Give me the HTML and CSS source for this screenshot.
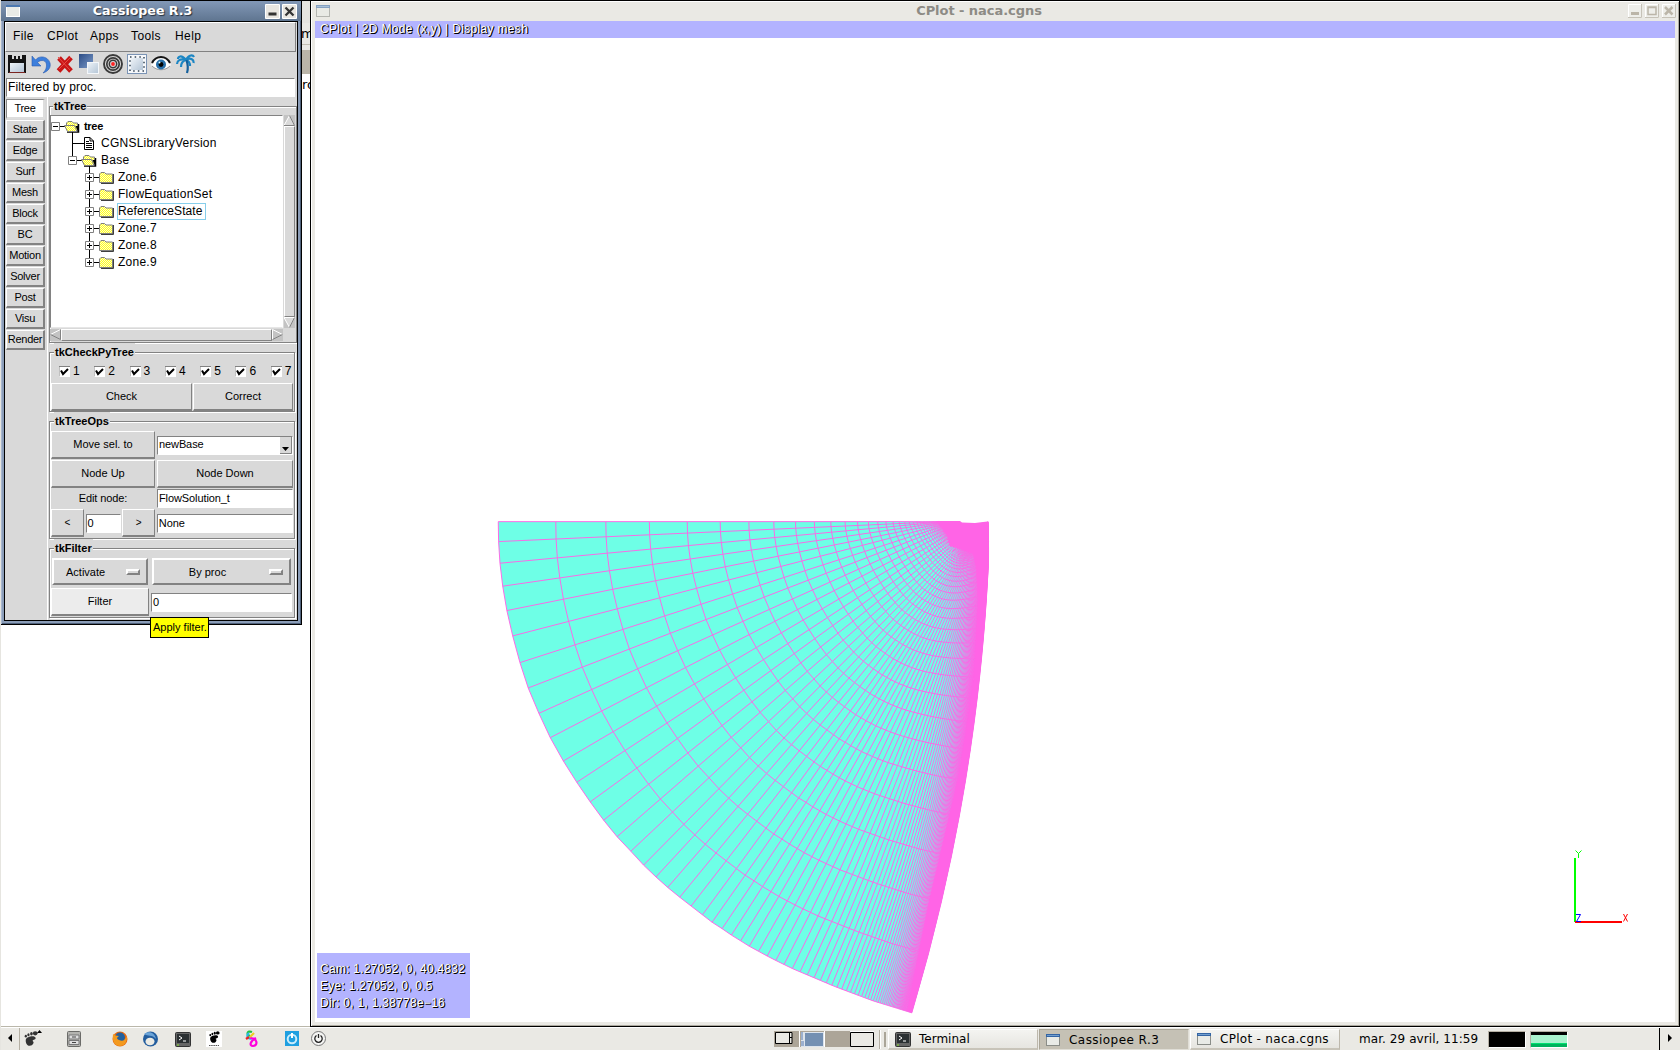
FILE: index.html
```html
<!DOCTYPE html>
<html lang="fr">
<head>
<meta charset="utf-8">
<title>Cassiopee R.3</title>
<link rel="stylesheet" href="styles.css">
</head>
<body>
<svg class="defs" width="0" height="0">
  <defs>
    <pattern id="dither" width="2" height="2" patternUnits="userSpaceOnUse"><rect width="2" height="2" fill="#fffcc8"/><rect width="1" height="1" fill="#ffff22"/><rect x="1" y="1" width="1" height="1" fill="#ffff22"/></pattern>
    <linearGradient id="blueSq" x1="0" y1="0" x2="1" y2="1"><stop offset="0" stop-color="#2b4c86"/><stop offset="1" stop-color="#7c9ac8"/></linearGradient>
    <linearGradient id="paleSq" x1="0" y1="0" x2="1" y2="1"><stop offset="0" stop-color="#eef3f8"/><stop offset="1" stop-color="#b4c5d6"/></linearGradient>
    <symbol id="folder" viewBox="0 0 16 13"><path d="M2 12H14V3" fill="none" stroke="#000" stroke-width="1.500"/><path d="M.5 11.500V3L2 1.500H5.500L7 3H13.500V11.500Z" fill="url(#dither)" stroke="#808080"/></symbol>
    <symbol id="open" viewBox="0 0 16 13"><path d="M3 12H14.500V4" fill="none" stroke="#000" stroke-width="1.500"/><path d="M2.500 5V3L4 1.500H8L9.500 3H13.500V11" fill="url(#dither)" stroke="#808080"/><path d="M.5 5.500H10.500L13 11.500H3.500Z" fill="url(#dither)" stroke="#808080"/><path d="M11.500 6L14 11.500V6Z" fill="#000"/></symbol>
    <symbol id="doc" viewBox="0 0 12 14"><path d="M1.500.5H7L10.500 4V12.500H1.500Z" fill="#fff" stroke="#000"/><path d="M7 .5V4H10.500M3 4.500H6M3 6.500H9M3 8.500H9M3 10.500H9" fill="none" stroke="#000"/></symbol>
    <symbol id="minus" viewBox="0 0 9 9"><path d="M.5.5H8.500V8.500H.5Z" fill="#fff" stroke="#808080"/><path d="M2 4.500H7" stroke="#000"/></symbol>
    <symbol id="plus" viewBox="0 0 9 9"><path d="M.5.5H8.500V8.500H.5Z" fill="#fff" stroke="#808080"/><path d="M2 4.500H7M4.500 2V7" stroke="#000"/></symbol>
    <symbol id="check" viewBox="0 0 11 11"><path d="M0 0H11V11H0Z" fill="#fff"/><path d="M0 10.500V.5H11" fill="none" stroke="#828282"/><path d="M2 4.500L4 8L9 3" fill="none" stroke="#000" stroke-width="2"/></symbol>
    <symbol id="win" viewBox="0 0 14 12"><rect x=".5" y=".5" width="13" height="11" fill="#e9ebe7" stroke="#8a8d88"/><rect width="14" height="3" fill="#3465a4"/><path d="M1 1.500H13" stroke="#729fcf"/></symbol>
    <symbol id="term" viewBox="0 0 16 15"><rect x=".5" y=".5" width="15" height="14" rx="1" fill="#666" stroke="#333"/><rect x="2" y="2" width="12" height="9" fill="#2b3032"/><path d="M4 4L7 6L4 8M8 9H11" fill="none" stroke="#fff"/><path d="M2 13H4" stroke="#8ae234"/></symbol>
    <symbol id="foot" viewBox="0 0 16 16"><ellipse cx="13" cy="2.500" rx="2.500" ry="2.200"/><ellipse cx="9" cy="3" rx="1.400" ry="1.900"/><ellipse cx="5.800" cy="4" rx="1.200" ry="1.600"/><ellipse cx="3" cy="5.500" rx="1.200" ry="1.400"/><path d="M3 9C4 5.500 13 4 13.500 7.500C13.500 10 9.500 9 10.500 11C12.500 12 10.500 16 7 15.800C4 15.500 2.500 12 3 9Z"/></symbol>
  </defs>
</svg>

<div class="desktop">
  <div class="backwin">
    <div class="bw-menu">mi</div><div class="bw-gap"></div><div class="bw-tool"></div><div class="bw-text">ro</div>
  </div>

  <section class="cplot">
    <header class="cp-title">
      <svg class="wicon" width="14" height="12" opacity=".55"><use href="#win"/></svg>
      <span class="cp-name">CPlot - naca.cgns</span>
      <span class="wbtns">
        <svg width="14" height="14"><path d="M.5.5H13.500V13.500H.5Z" fill="#eeeeea" stroke="#fff"/><path d="M0 13.500H13.500V0" fill="none" stroke="#c6c2b8"/><path d="M3 9.500H11" stroke="#bbb5a8" stroke-width="3"/></svg>
        <svg width="14" height="14"><path d="M.5.5H13.500V13.500H.5Z" fill="#eeeeea" stroke="#fff"/><path d="M0 13.500H13.500V0" fill="none" stroke="#c6c2b8"/><path d="M3 3H11V10.500H3ZM3 3.500H11" fill="none" stroke="#bbb5a8" stroke-width="1.500"/></svg>
        <svg width="14" height="14"><path d="M.5.5H13.500V13.500H.5Z" fill="#eeeeea" stroke="#fff"/><path d="M0 13.500H13.500V0" fill="none" stroke="#c6c2b8"/><path d="M3 3L10.500 10.500M10.500 3L3 10.500" stroke="#bbb5a8" stroke-width="2.500"/></svg>
      </span>
    </header>
    <div class="cp-view">
      <div class="cp-info hud">CPlot | 2D Mode (x,y) | Display mesh</div>
      <svg class="mesh" id="mesh" viewBox="315 38 1360 984" width="1360" height="984"></svg>
      <div class="cp-cam hud"><div>Cam: 1.27052, 0, 40.4832</div><div>Eye: 1.27052, 0, 0.5</div><div>Dir: 0, 1, 1.38778e−16</div></div>
      <svg class="axes" width="60" height="80" viewBox="1570 845 60 80"><path d="M1575 858V922" stroke="#0f0" stroke-width="2"/><path d="M1575 922H1622" stroke="#f00" stroke-width="2"/><path d="M1575.500 850.500L1578.500 853.500L1581.500 850.500M1578.500 853.500V858" fill="none" stroke="#0f0"/><path d="M1576 914.500H1580.500L1576.500 921.500H1581" fill="none" stroke="#00f"/><path d="M1623.500 914L1627.500 921.500M1627.500 914L1623.500 921.500" stroke="#f00"/></svg>
    </div>
  </section>

  <section class="cass">
    <header class="ca-title">
      <svg width="14" height="12"><rect x=".5" y=".5" width="13" height="11" fill="#e9ebe7" stroke="#fff"/><path d="M0 1H14" stroke="#4b78b0" stroke-width="2"/></svg>
      <span class="ca-name">Cassiopee R.3</span>
      <span class="wbtns dark">
        <svg width="15" height="15"><path d="M.5.5H14.500V14.500H.5Z" fill="#e8e6e1" stroke="#fff"/><path d="M3.500 10H11.500" stroke="#333" stroke-width="3"/></svg>
        <svg width="15" height="15"><path d="M.5.5H14.500V14.500H.5Z" fill="#e8e6e1" stroke="#fff"/><path d="M3.500 3.500L11.500 11.500M11.500 3.500L3.500 11.500" stroke="#333" stroke-width="2.300"/></svg>
      </span>
    </header>
    <div class="ca-body">
      <nav class="menu"><span class="m1">File</span><span class="m2">CPlot</span><span class="m3">Apps</span><span class="m4">Tools</span><span>Help</span></nav>
      <div class="tools">
        <svg width="20" height="20"><path d="M1 1H5V5H7V2H9V5H11V2H13V5H15V1H19V19H1Z" fill="#141414"/><rect x="3" y="9" width="14" height="9" fill="url(#paleSq)"/><path d="M2 18.500H18" stroke="#7a2420"/></svg>
        <svg width="20" height="20"><path d="M1 2V12H10L6.500 8.500C10 5 16 6 15.500 12C15.300 15 14 17 12 19C18 17 20 13 19 9C17 2 8 1 4.500 6Z" fill="#3d7fdc" stroke="#2c5db0" stroke-width=".6"/></svg>
        <svg width="20" height="20"><path d="M4 4L16 17M16 3.500L3.500 17" stroke="#c81616" stroke-width="5"/><path d="M3 3L15 16M16 3L4 15" stroke="#e94a44" stroke-width="1"/></svg>
        <svg width="20" height="20"><rect width="14" height="14" fill="url(#blueSq)"/><rect x="8.500" y="8.500" width="11" height="11" fill="url(#paleSq)" stroke="#f4f7fa"/></svg>
        <svg width="20" height="20"><g fill="none" stroke="#3a3a3a"><circle cx="10" cy="10" r="9" stroke-width="1.900"/><circle cx="10" cy="10" r="6.200" stroke-width="1.700"/><circle cx="10" cy="10" r="3.700" stroke-width="1.500"/></g><circle cx="10" cy="10" r="1.900" fill="#f22"/></svg>
        <svg width="20" height="20"><rect x=".5" y=".5" width="19" height="19" fill="#f6f8fb" stroke="#7b94b5"/><rect x="4" y="4" width="12" height="12" fill="url(#paleSq)"/><rect x="3" y="3" width="14" height="14" fill="none" stroke="#345" stroke-width="1.500" stroke-dasharray="1.500 3.167"/></svg>
        <svg width="20" height="20"><path d="M0 11C5 2 15 2 20 11C15 17 5 17 0 11Z" fill="#fff"/><path d="M1 9C5 1 15 1 19 9" fill="none" stroke="#151515" stroke-width="2"/><path d="M1 12C6 17 14 17 19 12" fill="none" stroke="#999"/><circle cx="10" cy="10.500" r="5" fill="#286fa8"/><circle cx="10" cy="10.500" r="2.400" fill="#000"/><circle cx="8.500" cy="8.500" r="1" fill="#dff"/></svg>
        <svg width="20" height="20"><g fill="none" stroke="#1c86c4" stroke-width="2.200"><path d="M11 6C6 0 3 3 3 5M11 6C5 4 2 7 2 10M11 6C7 7 6 10 6 13M11 6C14 0 18 1 19 3M11 6C16 3 19 6 18.500 9M11 6C14 7 15 9 15 12"/><path d="M11.500 6C13 11 13 16 12 19" stroke="#15609c"/></g></svg>
      </div>
      <div class="entry msg">Filtered by proc.</div>
      <div class="main">
        <div class="tabs"><span class="on">Tree</span><span>State</span><span>Edge</span><span>Surf</span><span>Mesh</span><span>Block</span><span>BC</span><span>Motion</span><span>Solver</span><span>Post</span><span>Visu</span><span>Render</span></div>
        <div class="panes">
          <fieldset class="tkTree"><legend>tkTree</legend>
            <div class="treegrid">
              <div class="tree">
                <div class="row"><svg width="32" height="17"><path d="M9 8.500H14M21.500 14V17" stroke="#000"/><use href="#minus" x="0" y="4" width="9" height="9"/><use href="#open" x="13" y="2" width="16" height="13"/></svg><span class="root">tree</span></div>
                <div class="row"><svg width="49" height="17"><path d="M21.500 0V17M21 8.500H33" stroke="#000"/><use href="#doc" x="32" y="2" width="12" height="14"/></svg><span>CGNSLibraryVersion</span></div>
                <div class="row"><svg width="49" height="17"><path d="M21.500 0V5M26 8.500H31M38.500 14V17" stroke="#000"/><use href="#minus" x="17" y="4" width="9" height="9"/><use href="#open" x="30" y="2" width="16" height="13"/></svg><span>Base</span></div>
                <div class="row z"><svg width="66" height="17"><path d="M38.500 0V17M43 8.500H49" stroke="#000"/><use href="#plus" x="34" y="4" width="9" height="9"/><use href="#folder" x="48" y="2" width="16" height="13"/></svg><span>Zone.6</span></div>
                <div class="row z"><svg width="66" height="17"><path d="M38.500 0V17M43 8.500H49" stroke="#000"/><use href="#plus" x="34" y="4" width="9" height="9"/><use href="#folder" x="48" y="2" width="16" height="13"/></svg><span>FlowEquationSet</span></div>
                <div class="row z"><svg width="66" height="17"><path d="M38.500 0V17M43 8.500H49" stroke="#000"/><use href="#plus" x="34" y="4" width="9" height="9"/><use href="#folder" x="48" y="2" width="16" height="13"/></svg><span class="sel">ReferenceState</span></div>
                <div class="row z"><svg width="66" height="17"><path d="M38.500 0V17M43 8.500H49" stroke="#000"/><use href="#plus" x="34" y="4" width="9" height="9"/><use href="#folder" x="48" y="2" width="16" height="13"/></svg><span>Zone.7</span></div>
                <div class="row z"><svg width="66" height="17"><path d="M38.500 0V17M43 8.500H49" stroke="#000"/><use href="#plus" x="34" y="4" width="9" height="9"/><use href="#folder" x="48" y="2" width="16" height="13"/></svg><span>Zone.8</span></div>
                <div class="row z"><svg width="66" height="17"><path d="M38.500 0V5M43 8.500H49" stroke="#000"/><use href="#plus" x="34" y="4" width="9" height="9"/><use href="#folder" x="48" y="2" width="16" height="13"/></svg><span>Zone.9</span></div>
              </div>
              <div class="vs"><svg width="11" height="11"><path d="M5.500 0L11 10.500H0Z" fill="#d9d9d9"/><path d="M0 10.500L5.500 .5" stroke="#fff"/><path d="M5.500 .5L10.500 10.500H0" fill="none" stroke="#828282"/></svg><i></i><svg width="11" height="11"><path d="M5.500 11L11 .5H0Z" fill="#d9d9d9"/><path d="M11 .5H0L5.500 10.500" fill="none" stroke="#fff"/><path d="M10.500 .5L5.500 10.500" stroke="#828282"/></svg></div>
              <div class="hs"><svg width="11" height="11"><path d="M.5 5.500L10.500 .5" stroke="#fff"/><path d="M.5 5.500L10.500 10.500V.5" fill="none" stroke="#828282"/></svg><i></i><svg width="11" height="11"><path d="M10.500 5.500L.5 .5V10.500" fill="none" stroke="#fff"/><path d="M10.500 5.500L.5 10.500" stroke="#828282"/></svg></div>
            </div>
          </fieldset>
          <fieldset class="tkCheck"><legend>tkCheckPyTree</legend>
            <div class="checks">
              <label><svg width="11" height="11"><use href="#check"/></svg>1</label><label><svg width="11" height="11"><use href="#check"/></svg>2</label><label><svg width="11" height="11"><use href="#check"/></svg>3</label><label><svg width="11" height="11"><use href="#check"/></svg>4</label><label><svg width="11" height="11"><use href="#check"/></svg>5</label><label><svg width="11" height="11"><use href="#check"/></svg>6</label><label><svg width="11" height="11"><use href="#check"/></svg>7</label>
            </div>
            <div class="g2 gcheck"><span class="btn">Check</span><span class="btn">Correct</span></div>
          </fieldset>
          <fieldset class="tkOps"><legend>tkTreeOps</legend>
            <div class="g2 gops"><span class="btn">Move sel. to</span><span class="entry combo">newBase<svg width="12" height="17"><rect width="12" height="17" fill="#d9d9d9"/><path d="M0 16.500H11.500V0" fill="none" stroke="#828282"/><path d="M2 10H9L5.500 14Z"/></svg></span></div>
            <div class="g2 gops gap2"><span class="btn">Node Up</span><span class="btn">Node Down</span></div>
            <div class="g2 gops edit"><span class="lbl">Edit node:</span><span class="entry">FlowSolution_t</span></div>
            <div class="g4"><span class="btn sym">&lt;</span><span class="entry">0</span><span class="btn sym">&gt;</span><span class="entry">None</span></div>
          </fieldset>
          <fieldset class="tkFilter"><legend>tkFilter</legend>
            <div class="g2 gopt"><span class="btn opt"><b>Activate</b><i></i></span><span class="btn opt"><b>By proc</b><i></i></span></div>
            <div class="g2 gfil"><span class="btn hot">Filter</span><span class="entry">0</span></div>
          </fieldset>
        </div>
      </div>
    </div>
  </section>
  <div class="tip">Apply filter.</div>

  <footer class="bar">
    <span class="hide"><svg width="20" height="22"><path d="M12 6V14L8 10Z"/></svg></span>
    <svg class="launch" width="320" height="22" viewBox="21 1028 320 22">
      <g fill="#333"><use href="#foot" x="23" y="1031" width="15" height="15"/><path d="M37 1033L39.500 1030L42 1033Z" fill="#000"/></g>
      <rect x="67.500" y="1031.500" width="13" height="15" rx="1" fill="#b4b4b0" stroke="#6b6b68"/><path d="M69 1035H79V1039H69ZM69 1040.500H79V1044.500H69Z" fill="#dedede" stroke="#777"/><path d="M72 1037H76M72 1042.500H76" stroke="#444"/>
      <circle cx="120" cy="1039" r="7.500" fill="#e66a12"/><circle cx="120" cy="1037.500" r="5" fill="#24609e"/><path d="M113 1034C112 1042 115 1046 120 1046C124 1046 127 1043 127 1036C125 1040 123 1042 119 1040C116 1039 117 1037 119 1036C116 1036 115 1035 113 1034Z" fill="#f39a1f"/>
      <circle cx="150.500" cy="1039" r="7.500" fill="#235d9e"/><ellipse cx="150" cy="1041.500" rx="4.500" ry="3.800" fill="#ecebe4"/><path d="M144 1034C149 1030 155 1033 156 1039C152 1034 148 1037 144 1034" fill="#6ba4d8"/>
      <use href="#term" x="175" y="1032" width="16" height="15"/>
      <rect x="206" y="1031" width="16" height="16" fill="#fff"/><use href="#foot" x="208" y="1031" width="12" height="12"/><path d="M209 1045.500H219" stroke="#555" stroke-dasharray="1.500 .7"/>
      <g fill="none" stroke-width="2.200"><path d="M252 1032C247 1030 246 1035 250 1036" stroke="#22c43c"/><path d="M249 1033C245 1036 249 1040 252 1038" stroke="#28b8e8"/><path d="M250 1038C258 1038 258 1046 253 1046C249 1046 250 1041 256 1038" stroke="#f0d"/><path d="M246 1039L249 1037" stroke="#e22"/><path d="M254 1033L250 1037" stroke="#ec2"/></g>
      <rect x="285" y="1031" width="14" height="15" fill="#1e9fe0"/><circle cx="292" cy="1039" r="4.300" fill="none" stroke="#c9ecfc" stroke-width="2"/><path d="M292 1033V1038" stroke="#fff" stroke-width="2"/>
      <circle cx="318.500" cy="1038.500" r="7" fill="#f5f5f3" stroke="#777"/><path d="M316.500 1035.500A3.700 3.700 0 1 0 320.500 1035.500M318.500 1034V1038" fill="none" stroke="#222" stroke-width="1.300"/>
    </svg>
    <svg class="pager" width="113" height="22" viewBox="773 1028 113 22"><path d="M774 1031H850V1047H774Z" fill="#aca598"/><path d="M775.500 1032.500H792V1043.500H775.500ZM789.500 1032.500V1043.500M789 1037.500H792" fill="#eae9e4" stroke="#000"/><path d="M799.500 1031V1047" stroke="#fff"/><rect x="801" y="1032" width="23" height="15" fill="#dde4ec"/><path d="M801 1032H803V1040H801ZM801 1041H804V1046H801Z" fill="#9bb0cf"/><rect x="805" y="1033" width="18" height="13" fill="#7490b2"/><path d="M824.500 1031V1047" stroke="#fff"/><path d="M850 1031H874V1047H850Z" fill="#fff"/><path d="M850.500 1032.500H873.500V1046.500H850.500Z" fill="#eae9e4" stroke="#000"/><path d="M879.500 1030V1049" stroke="#b5b0a4"/><path d="M880.500 1030V1049" stroke="#fff"/><path d="M885 1032V1047" stroke="#aaa598" stroke-width="2"/></svg>
    <div class="tasks">
      <span class="task first"><svg width="16" height="15"><use href="#term"/></svg>Terminal</span>
      <span class="task cur"><svg width="14" height="12"><use href="#win"/></svg>Cassiopee R.3</span>
      <span class="task"><svg width="14" height="12"><use href="#win"/></svg>CPlot - naca.cgns</span>
    </div>
    <span class="clock">mar. 29 avril, 11:59</span>
    <span class="mon"></span><span class="mon load"></span>
    <span class="hide end"><svg width="20" height="22"><path d="M8 6V14L12 10Z"/></svg></span>
  </footer>
</div>
<script src="mesh.js"></script>
</body>
</html>
```
FILE: styles.css
```css
* { box-sizing: border-box; }
body { margin: 0; font: 11px/13px "Liberation Sans", Arial, sans-serif; color: #000; overflow: hidden; }
svg { display: block; flex: none; }
.defs { position: absolute; }
.desktop { position: relative; width: 1680px; height: 1050px; background: #fff; border-left: 1px solid #e6e5e0; overflow: hidden; }
.desktop > * { margin-left: -1px; }

.backwin { position: absolute; left: 302px; top: 0; width: 8px; height: 620px; border-top: 1px solid #000; overflow: hidden; font: 13px/16px "DejaVu Sans", sans-serif; background: #fff; }
.bw-menu { height: 44px; background: #eae9e4; padding-top: 25px; border-bottom: 1px solid #c3bfb3; text-indent: -1px; box-shadow: inset 0 22px #e5e4df; }
.bw-gap { height: 5px; background: #eae9e4; }
.bw-tool { height: 24px; background: #bab5a9; }
.bw-text { padding-top: 3px; }

.cplot { position: absolute; left: 310px; top: 0; width: 1370px; height: 1027px; background: #eae9e4; border: 1px solid #000; padding: 0 4px 4px; box-shadow: inset 1px 1px #fff, inset -1px -1px #aca99f; }
.cp-title { height: 20px; display: flex; align-items: center; }
.wicon { margin-left: 1px; }
.cp-name { flex: 1; text-align: center; font: bold 13px/20px "DejaVu Sans", sans-serif; color: #8d8b85; padding-right: 4px; padding-left: 4px; letter-spacing: -.05px; }
.wbtns { display: flex; gap: 3px; padding-right: 1px; }
.cplot .wbtns { padding-right: 0; margin-right: -1px; }
.cp-view { position: relative; height: 1001px; background: #fff; display: flex; flex-direction: column; }
.hud { color: #fff; text-shadow: 1px 1px #000, 1px 0 #333; font-size: 12px; background: #b3b3ff; }
.cp-info { height: 17px; line-height: 17px; padding-left: 5px; letter-spacing: .33px; }
.cp-cam { position: absolute; left: 2px; top: 932px; width: 153px; height: 65px; padding: 8px 3px; line-height: 17px; letter-spacing: .27px; white-space: nowrap; }
.axes { position: absolute; left: 1255px; top: 824px; }

.cass { position: absolute; left: 0; top: 0; width: 302px; height: 625px; border: 1px solid #000; background: #8b9db8; padding: 0 3px 3px; box-shadow: inset 1px 1px #a9b8d0, inset -1px -1px #4f617b; }
.ca-title { height: 20px; margin: 0 -3px; padding: 0 4px 0 5px; display: flex; align-items: center; background: linear-gradient(#8298b7, #5f7590); }
.ca-name { flex: 1; text-align: center; color: #fff; font: bold 12.600px/20px "DejaVu Sans", sans-serif; text-shadow: 1px 1px 1px #26303c; }
.wbtns.dark { gap: 2px; padding: 0; }
.ca-body { height: 600px; border: 1px solid #000; background: #d9d9d9; overflow: hidden; padding-right: 1px; }
.menu { height: 30px; border: 1px solid #fff; border-bottom-color: #828282; border-right-color: #828282; display: flex; font-size: 12px; line-height: 27px; padding-left: 7px; letter-spacing: .4px; }
.menu span { width: 44px; }
.menu .m1 { width: 34px; } .menu .m2 { width: 43px; } .menu .m3 { width: 41px; }
.tools { height: 26px; display: flex; gap: 4px; padding: 2px; }
.entry { display: block; background: #fff; border: 1px solid #fff; border-top-color: #828282; border-left-color: #828282; line-height: 17px; height: 19px; padding-left: 1px; letter-spacing: -.1px; white-space: nowrap; }
.msg { margin: 0 1px; font-size: 12px; padding-left: 1px; letter-spacing: .15px; }
.main { display: flex; height: 524px; }
.tabs { width: 43px; padding: 2px 2px 0 1px; display: flex; flex-direction: column; gap: 1px; flex: none; border-right: 1px solid #fff; }
.tabs span { height: 20px; border: 1px solid #fff; border-right: 2px solid #828282; border-bottom: 2px solid #828282; line-height: 17px; letter-spacing: -.25px; white-space: nowrap; display: flex; justify-content: center; }
.tabs .on { background: #fff; border-color: #888 #ddd #ddd #888; }
.panes { flex: 1; min-width: 0; }
fieldset { margin: 0; padding: 0; border: 0; position: relative; min-width: 0; width: 247px; }
fieldset::before { content: ""; position: absolute; inset: 9px 0 0 1px; border: 1px solid #828282; box-shadow: 1px 1px #fff, inset 1px 1px #fff; pointer-events: none; }
legend { float: left; position: relative; z-index: 1; height: 18px; line-height: 18px; margin-left: 5px; padding: 0 1px; background: #d9d9d9; font-weight: bold; letter-spacing: 0; }
legend + div { clear: both; position: relative; }
.tkTree { height: 246px; width: 249px; }
.treegrid { width: 247px; margin-left: 2px; display: grid; grid-template-columns: 233px 11px; grid-template-rows: 213px 12px; gap: 1px; }
.tree { background: #fff; border: 1px solid #828282; border-right-color: #fff; border-bottom-color: #e6e6e6; padding-top: 2px; }
.row { display: flex; height: 17px; font-size: 12px; line-height: 17px; letter-spacing: .24px; white-space: nowrap; }
.row span { padding-left: 1px; }
.row .root { font-weight: bold; font-size: 11px; letter-spacing: -.3px; }
.row .sel { outline: 1px solid #87ceeb; outline-offset: -1px; padding-right: 3px; letter-spacing: .08px; }
.vs, .hs { display: flex; background: #c3c3c3; }
.vs { flex-direction: column; }
.vs i, .hs i { flex: 1; background: #d9d9d9; border: 1px solid #fff; border-right-color: #828282; border-bottom-color: #828282; }
.tkCheck { height: 69px; }
.tkCheck legend, .tkOps legend, .tkFilter legend { margin-left: 6px; }
.checks { display: flex; height: 22px; padding: 0 0 2px 11px; font-size: 12px; align-items: center; }
.checks label { width: 35.300px; flex: none; display: flex; gap: 3px; align-items: center; }
.checks label:last-child { width: auto; }
.g2 { display: grid; }
.gcheck { grid-template-columns: 141px 100px; gap: 1px; padding-left: 3px; }
.btn { height: 28px; border: 1px solid #fff; border-right: 1px solid #828282; border-bottom: 2px solid #828282; text-align: center; line-height: 24px; }
.tkOps { height: 127px; }
.tkOps legend, .tkFilter legend { margin-bottom: 1px; }
.gops { grid-template-columns: 104px 136px; gap: 2px; padding-left: 3px; align-items: center; }
.gap2 { margin-top: 1px; }
.edit { height: 19px; margin: 1px 0; }
.lbl { text-align: center; letter-spacing: -.1px; }
.combo { display: flex; justify-content: space-between; line-height: 15px; }
.g4 { display: grid; grid-template-columns: 33px 35px 33px 136px; column-gap: 1.600px; padding-left: 3px; align-items: center; }
.sym { font-size: 10px; padding-top: 1px; }
.tkFilter { height: 79px; }
.gopt { grid-template-columns: 96px 139px; gap: 4px; padding: 0 0 0 4px; height: 30px; }
.opt { height: 27px; border-width: 2px; border-right: 2px solid #828282; display: flex; align-items: center; justify-content: space-between; padding: 0 6px 0 12px; }
.opt b { font-weight: normal; flex: 1; text-align: center; padding-right: 6px; }
.opt i { width: 14px; height: 6px; border: 2px solid #fff; border-right-color: #828282; border-bottom-color: #828282; }
.opt + .opt { padding-left: 0; } .opt + .opt b { padding-right: 8px; }
.opt:first-child b { text-align: left; padding: 0; }
.gfil { grid-template-columns: 98px 141px; gap: 2px; padding-left: 3px; align-items: center; }
.hot { background: #ececec; }
.tip { position: absolute; left: 150px; top: 617px; width: 59px; height: 21px; background: #ff0; border: 1px solid #000; line-height: 19px; padding-left: 2px; white-space: nowrap; }

.bar { position: absolute; left: 0; top: 1026px; width: 1681px; height: 24px; display: flex; background: #eae9e4; border-top: 1px solid #bab7aa; box-shadow: inset 0 1px #fff; font: 12px/23px "DejaVu Sans", sans-serif; padding-top: 1px; }
.cplot { z-index: 1; clip-path: inset(0); }
.cass { z-index: 2; }
.tip { z-index: 3; }
.hide { width: 20px; border-right: 1px solid #b5b0a4; margin-right: 1px; }
.pager { margin-left: 432px; }
.tasks { display: flex; margin-left: 2px; }
.task { width: 150px; height: 21px; margin: 1px 1px 0 0; display: flex; align-items: center; gap: 8px; padding-left: 6px; border: 1px solid #fff; border-right-color: #bdb8ac; border-bottom: 2px solid #c8c4b9; background: linear-gradient(#f4f4f1, #e6e5e0); letter-spacing: .3px; line-height: 20px; white-space: nowrap; }
.first { letter-spacing: 0; }
.task svg[width="14"] { margin-right: 1px; }
.cur { background: #c5c1b5; border-color: #aba698 #e0ded6 #e0ded6 #aba698; border-bottom-width: 1px; letter-spacing: .45px; }
.clock { width: 129px; margin-left: 18px; letter-spacing: .07px; white-space: nowrap; }
.mon { width: 38px; height: 17px; margin: 3px 4px 0 0; background: #000; border: 1px solid #fff; border-top-color: #b5b0a4; border-left-color: #b5b0a4; }
.load { background: linear-gradient(#000 3px, #a9f2cd 3px 11px, #00e070 11px 12px, #00b25c 12px); }
.end { margin: 0 0 0 auto; border-left: 1px solid #000; border-right: 0; width: 22px; }
```
FILE: mesh.js
```js
// Structured C-mesh around a NACA profile, lower quarter of the domain.
// Rim points are in mesh units; sx/sy convert them to view pixels.
const sx = x => 480 + x / 2.904;
const sy = y => 500 + y / 2.958;

const rim = [[53,64],[54,123],[58,187],[66,255],[78,327],[95,402],[116,481],[140,556],[171,631],[204,703],
  [242,772],[281,835],[320,893],[359,947],[398,996],[438,1039],[475,1080],[511,1115],[545,1146],[580,1175],
  [613,1201],[646,1227],[674,1249],[703,1268],[730,1287],[757,1304],[782,1320],[809,1335],[834,1349],
  [859,1362],[883,1374],[907,1386]];

const tail = [[907,1386],[1030,1439],[1140,1481],[1254,1517]];
const lerp = (table, x) => {
  let i = 0;
  while (i < table.length - 2 && x > table[i + 1][0]) i++;
  const [a, b] = [table[i], table[i + 1]];
  const f = (x - a[0]) / (b[0] - a[0]);
  return b.slice(1).map((v, k) => a[k + 1] + f * (v - a[k + 1]));
};

let step = 24, x = 907;
while (x + step * 0.935 < 1253) {
  step = Math.max(step * 0.935, 1.5);
  x += step;
  rim.push([x, lerp(tail, x)[0]]);
}
rim.push([1254, 1517]);

// where the line that starts at a rim point meets the profile
const wall = t => [1338 + 137 * t ** 0.8, 64 + 70 * Math.sin(Math.PI * t)];

const point = (o, s) => {
  const [ax, ay] = wall((o[0] - 53) / 1201);
  const w = Math.max(0, (o[0] - 450) / 804) ** 1.6;
  const bulge = w * (205 * s * (1 - s) + 6 * Math.min(1, s / 0.08) * (1 - s) ** 4);
  return [sx(ax + s * (o[0] - ax) + bulge), sy(ay + s * (o[1] - ay))];
};
const level = (o, i) => (0.87 + 0.01 * (o[0] - 53) / 1201) ** i;
const path = pts => 'M' + pts.map(p => p[0].toFixed(2) + ' ' + p[1].toFixed(2)).join('L');

const lines = [];
for (const o of rim) {
  const pts = [];
  for (let i = 0; i < 45; i++) pts.push(point(o, level(o, i)));
  pts.push(point(o, 0));
  lines.push(path(pts));
}
for (let i = 0; i < 45; i++) lines.push(path(rim.map(o => point(o, level(o, i)))));

const last = rim[rim.length - 1];
const edge = [];
for (let s = 0; s <= 1.001; s += 0.02) edge.push(point(last, Math.min(s, 1)));
const shape = path([...rim.map(o => point(o, 1)), ...edge.slice().reverse(), [975, 524], [962, 524], [938, 521.5]]) + 'Z';

// boundary layer: solid band along the trailing side
const band = path([[936,521],[960,521],[962,522.5],[975,523],[983,522],[987.5,521.5], ...edge,
  [907,1011],[928,905],[960,770],[974,680],[978,600],[976,568],[973,554],[966,551],[950,546],[947,536],[941,527]]) + 'Z';

document.getElementById('mesh').innerHTML =
  `<path d="${shape}" fill="#6effe6"/><path d="${lines.join('')}" fill="none" stroke="#ff64e6" stroke-width=".95"/>` +
  `<path d="${band}" fill="#ff64e6"/>`;
```
